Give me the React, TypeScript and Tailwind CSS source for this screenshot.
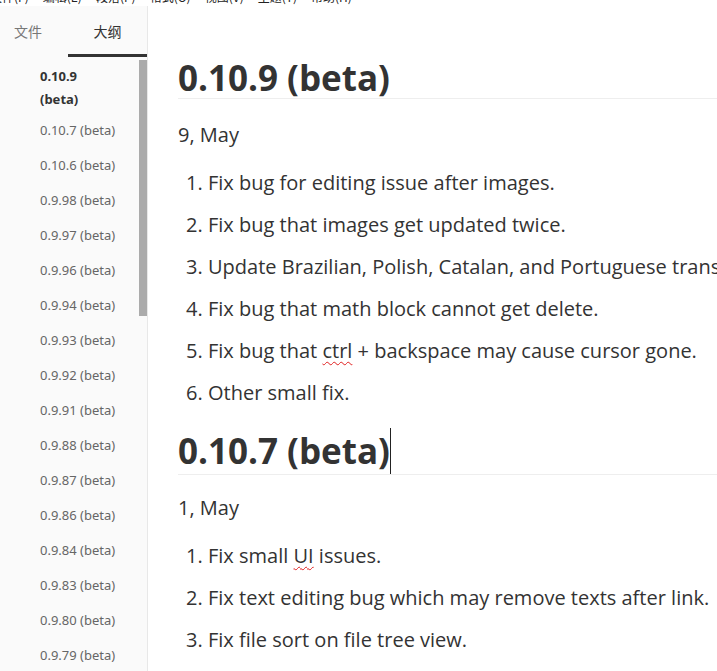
import { memo } from "react";

const menus = ["文件(F)", "编辑(E)", "段落(P)", "格式(O)", "视图(V)", "主题(T)", "帮助(H)"];

const outline = [
  "0.10.7 (beta)",
  "0.10.6 (beta)",
  "0.9.98 (beta)",
  "0.9.97 (beta)",
  "0.9.96 (beta)",
  "0.9.94 (beta)",
  "0.9.93 (beta)",
  "0.9.92 (beta)",
  "0.9.91 (beta)",
  "0.9.88 (beta)",
  "0.9.87 (beta)",
  "0.9.86 (beta)",
  "0.9.84 (beta)",
  "0.9.83 (beta)",
  "0.9.80 (beta)",
  "0.9.79 (beta)",
];

const Typo = ({ children }: { children: string }) => (
  <span className="underline decoration-wavy decoration-[#e02020] decoration-1 underline-offset-[3px]">{children}</span>
);

const Sidebar = () => (
  <aside className="w-[148px] shrink-0 bg-[#fafafa] border-r border-[#e8e8e8] flex flex-col font-['Noto_Sans','Noto_Sans_CJK_SC',sans-serif]">
    <div className="flex h-[51px] text-[14px] font-['Noto_Sans_CJK_SC',sans-serif]">
      <div className="w-[68px] flex items-center pl-[14px] pb-[3px] pt-[2px] text-[#777]">文件</div>
      <div className="flex-1 flex items-center justify-center pt-[2px] text-[#333] border-b-[3px] border-[#333]">大纲</div>
    </div>
    <div className="flex flex-1 overflow-hidden">
      <div className="flex-1 pl-[40px] pt-[8px] text-[13px] text-[#666]">
        <div className="h-[48px] font-bold text-[#333] leading-[23px]">
          <div>0.10.9</div>
          <div>(beta)</div>
        </div>
        {outline.map((item) => (
          <div key={item} className="h-[35px] flex items-center whitespace-nowrap">
            {item}
          </div>
        ))}
      </div>
      <div className="w-[8px] pt-[3px]">
        <div className="h-[256px] bg-[#ababab]" />
      </div>
    </div>
  </aside>
);

const Heading = ({ text, cursor }: { text: string; cursor?: boolean }) => (
  <h1 className="text-[35px] font-bold leading-[40px] text-[#333] border-b border-[#eeeeee] whitespace-nowrap">
    {text}
    {cursor && <span className="inline-block w-px h-[46px] bg-[#222] align-middle -mt-[8px]" />}
  </h1>
);

const Items = ({ items }: { items: React.ReactNode[] }) => (
  <ol className="list-decimal pl-[30px] mt-[13px] text-[#333]">
    {items.map((it, i) => (
      <li key={i} className="h-[42px] leading-[42px] whitespace-nowrap">
        {it}
      </li>
    ))}
  </ol>
);

const App = memo(() => {
  return (
    <div className="w-[717px] h-[671px] overflow-hidden bg-white flex flex-col">
      <div className="h-[6px] overflow-hidden bg-white">
        <div className="flex gap-[14px] -ml-[10px] -mt-[11px] text-[12px] leading-[16px] text-[#222] font-['Noto_Sans_CJK_SC',sans-serif]">
          {menus.map((m) => (
            <span key={m} className="whitespace-nowrap">{m}</span>
          ))}
        </div>
      </div>
      <div className="flex flex-1 overflow-hidden">
        <Sidebar />
        <main className="flex-1 overflow-hidden pl-[30px] pt-[52px] font-['Open_Sans',sans-serif] text-[20px] text-[#333]">
          <Heading text="0.10.9 (beta)" />
          <p className="mt-[22px] h-[28px] leading-[28px]">9, May</p>
          <Items
            items={[
              "Fix bug for editing issue after images.",
              "Fix bug that images get updated twice.",
              "Update Brazilian, Polish, Catalan, and Portuguese translation.",
              "Fix bug that math block cannot get delete.",
              <>
                Fix bug that <Typo>ctrl</Typo> + backspace may cause cursor gone.
              </>,
              "Other small fix.",
            ]}
          />
          <div className="mt-[17px]">
            <Heading text="0.10.7 (beta)" cursor />
          </div>
          <p className="mt-[19px] h-[28px] leading-[28px]">1, May</p>
          <Items
            items={[
              <>
                Fix small <Typo>UI</Typo> issues.
              </>,
              "Fix text editing bug which may remove texts after link.",
              "Fix file sort on file tree view.",
            ]}
          />
        </main>
      </div>
    </div>
  );
});

App.displayName = "App";

export default App;
